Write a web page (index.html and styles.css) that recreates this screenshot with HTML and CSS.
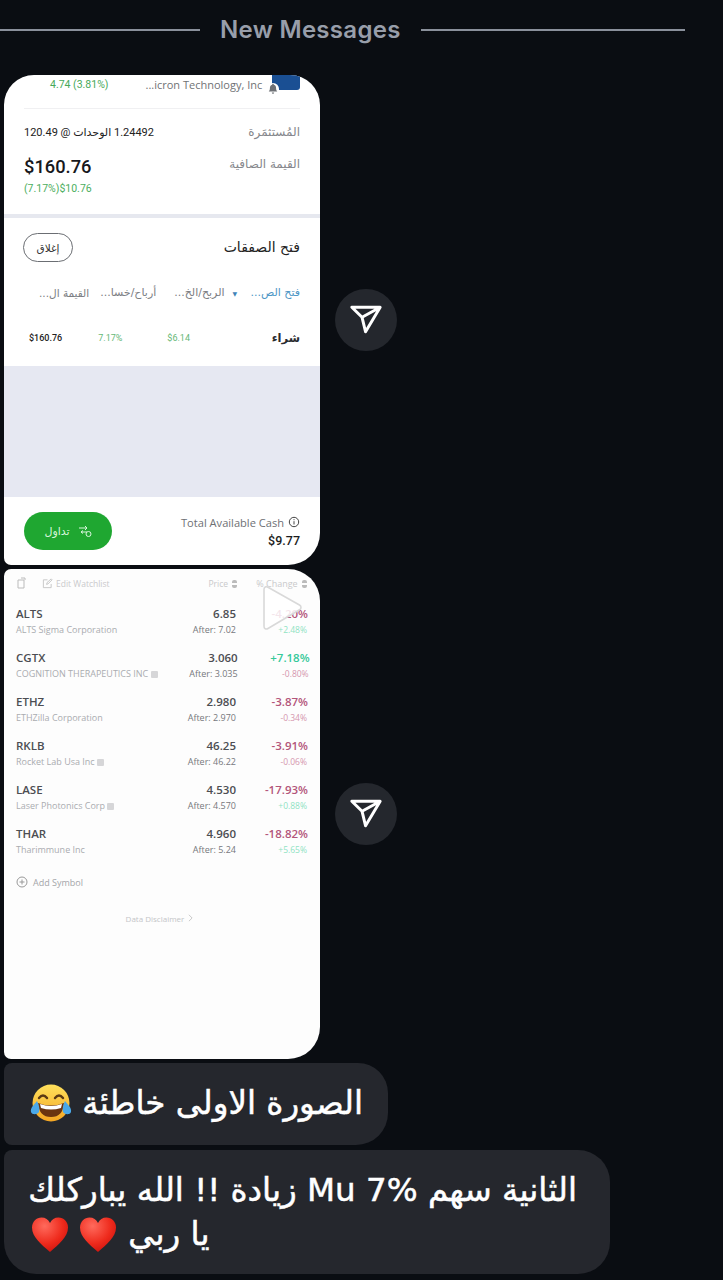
FILE: index.html
```html
<!DOCTYPE html>
<html lang="en">
<head>
<meta charset="utf-8">
<title>New Messages</title>
<link rel="stylesheet" href="styles.css">
</head>
<body>
<main class="chat">
  <header class="divider"><span class="divider-line divider-left"></span><span class="divider-text">New Messages</span><span class="divider-line divider-right"></span></header>

  <section class="media-row row-one">
    <article class="shot shot-one">
      <div class="top-strip">
        <span class="gain-top">4.74 (3.81%)</span>
        <span class="company">...icron Technology, Inc</span>
        <span class="logo-box">
          <svg class="bell" viewBox="0 0 12 14"><path d="M6 1a1 1 0 0 1 1 1c2 .5 2.6 2.2 2.6 4 0 2 .7 3 1.4 4H1c.7-1 1.4-2 1.4-4 0-1.800.6-3.500 2.600-4a1 1 0 0 1 1-1zM4.600 11h2.800a1.400 1.400 0 0 1-2.800 0z" fill="#6d7075"/></svg>
        </span>
      </div>
      <div class="summary">
        <div class="line-invested">
          <span class="units" dir="rtl">1.24492 الوحدات @ 120.49</span>
          <span class="label" dir="rtl">المُستثمَرة</span>
        </div>
        <div class="line-value">
          <div><div class="amount">$160.76</div><div class="amount-gain">(7.17%)$10.76</div></div>
          <span class="label label-net" dir="rtl">القيمة الصافية</span>
        </div>
      </div>
      <div class="trades-head">
        <button class="close-btn" dir="rtl">إغلاق</button>
        <span class="trades-title" dir="rtl">فتح الصفقات</span>
      </div>
      <div class="tabs">
        <span class="tab tab-small" dir="rtl">القيمة ال...</span>
        <span class="tab tab-pl" dir="rtl">أرباح/خسا...</span>
        <span class="tab tab-pnl" dir="rtl">الربح/الخ...</span>
        <span class="caret">▼</span>
        <span class="tab tab-active" dir="rtl">فتح الص...</span>
      </div>
      <div class="trade-row">
        <span class="cell-value">$160.76</span>
        <span class="cell-pct">7.17%</span>
        <span class="cell-gain">$6.14</span>
        <span class="cell-type" dir="rtl">شراء</span>
      </div>
      <div class="empty-block"></div>
      <div class="shot-foot">
        <button class="trade-btn" dir="rtl">
          <svg class="trade-icon" viewBox="0 0 14 14"><path d="M1 4h8M7 2l2 2-2 2M9 8H3M5 6.500 3 8l2 1.500" fill="none" stroke="#d8f5dc" stroke-width="1"/><circle cx="10.500" cy="10" r="2.500" fill="none" stroke="#d8f5dc" stroke-width="1"/></svg>
          <span>تداول</span>
        </button>
        <div class="cash">
          <div class="cash-label">Total Available Cash
            <svg class="info" viewBox="0 0 12 12"><circle cx="6" cy="6" r="4.700" fill="none" stroke="#444" stroke-width="1"/><path d="M6 5.200v3.300M6 3.200v1" stroke="#444" stroke-width="1"/></svg>
          </div>
          <div class="cash-value">$9.77</div>
        </div>
      </div>
    </article>
    <button class="send-btn" aria-label="Share">
      <svg class="send-icon" viewBox="0 0 24 24"><path d="M22 3 9.218 10.083M11.698 20.334 22 3H2l7.218 7.083z" fill="none" stroke="#fff" stroke-width="2.100" stroke-linejoin="round"/></svg>
    </button>
  </section>

  <section class="media-row row-two">
    <article class="shot shot-two">
      <div class="watch-head">
        <svg class="copy-icon" viewBox="0 0 12 12"><path d="M2 3h6v8H2zM5 1h4v2" fill="none" stroke="#bbb" stroke-width="1"/></svg>
        <svg class="edit-icon" viewBox="0 0 12 12"><path d="M10 6.500V10.500H1.500V2H6M5 7l.5-2L10 1l1 1-4.500 4.500z" fill="none" stroke="#c4c4c4" stroke-width="1"/></svg>
        <span class="edit-text">Edit Watchlist</span>
        <span class="head-price">Price <i class="sort"></i></span>
        <span class="head-change">% Change <i class="sort"></i></span>
      </div>
      <div class="stock"><div class="stock-id"><b>ALTS</b><small>ALTS Sigma Corporation</small></div><div class="stock-price"><b>6.85</b><small>After: 7.02</small></div><div class="stock-change"><b class="down">-4.20%</b><small class="up-light">+2.48%</small></div></div>
      <div class="stock"><div class="stock-id"><b>CGTX</b><small>COGNITION THERAPEUTICS INC <i class="chip"></i></small></div><div class="stock-price"><b>3.060</b><small>After: 3.035</small></div><div class="stock-change"><b class="up">+7.18%</b><small class="down-light">-0.80%</small></div></div>
      <div class="stock"><div class="stock-id"><b>ETHZ</b><small>ETHZilla Corporation</small></div><div class="stock-price"><b>2.980</b><small>After: 2.970</small></div><div class="stock-change"><b class="down">-3.87%</b><small class="down-light">-0.34%</small></div></div>
      <div class="stock"><div class="stock-id"><b>RKLB</b><small>Rocket Lab Usa Inc <i class="chip"></i></small></div><div class="stock-price"><b>46.25</b><small>After: 46.22</small></div><div class="stock-change"><b class="down">-3.91%</b><small class="down-light">-0.06%</small></div></div>
      <div class="stock"><div class="stock-id"><b>LASE</b><small>Laser Photonics Corp <i class="chip"></i></small></div><div class="stock-price"><b>4.530</b><small>After: 4.570</small></div><div class="stock-change"><b class="down">-17.93%</b><small class="up-light">+0.88%</small></div></div>
      <div class="stock"><div class="stock-id"><b>THAR</b><small>Tharimmune Inc</small></div><div class="stock-price"><b>4.960</b><small>After: 5.24</small></div><div class="stock-change"><b class="down">-18.82%</b><small class="up-light">+5.65%</small></div></div>
      <div class="add-symbol">
        <svg class="add-icon" viewBox="0 0 12 12"><circle cx="6" cy="6" r="5" fill="none" stroke="#999" stroke-width="1"/><path d="M6 3.500v5M3.500 6h5" stroke="#999" stroke-width="1"/></svg>
        <span>Add Symbol</span>
      </div>
      <div class="disclaimer">Data Disclaimer <svg class="chev" viewBox="0 0 6 10"><path d="m1 1 4 4-4 4" fill="none" stroke="#bbb" stroke-width="1"/></svg></div>
      <svg class="play" viewBox="0 0 42 46"><path d="M3 4.500c0-2.500 2-3.500 4-2.300L38.500 20c2 1.200 2 3.600 0 4.800L7 43.500c-2 1.200-4 .2-4-2.300z" fill="rgba(255,255,255,.85)" stroke="#d9d9d9" stroke-width="1.600"/></svg>
    </article>
    <button class="send-btn" aria-label="Share">
      <svg class="send-icon" viewBox="0 0 24 24"><path d="M22 3 9.218 10.083M11.698 20.334 22 3H2l7.218 7.083z" fill="none" stroke="#fff" stroke-width="2.100" stroke-linejoin="round"/></svg>
    </button>
  </section>

  <div class="bubble bubble-one" dir="rtl">الصورة الاولى خاطئة
    <svg class="emoji-joy" viewBox="0 0 42 38"><defs><linearGradient id="joyFace" x1="0" y1="0" x2="0" y2="1"><stop offset="0" stop-color="#ffe15c"/><stop offset="1" stop-color="#f5a623"/></linearGradient></defs><circle cx="21" cy="19" r="18.500" fill="url(#joyFace)"/><path d="M9 14q4-5 8 0M25 14q4-5 8 0" fill="none" stroke="#5b3a14" stroke-width="2.400" stroke-linecap="round"/><path d="M8 19q13 5 26 0q-1 14-13 14T8 19z" fill="#6b3410"/><path d="M10 20q11 4 22 0l-1 4q-10 3-20 0z" fill="#fff"/><path d="M7 17c-3 4-7 7-6 11 1 3 6 3 8 0 1-3 0-7-2-11zM35 17c3 4 7 7 6 11-1 3-6 3-8 0-1-3 0-7 2-11z" fill="#4aa8e8"/></svg>
  </div>
  <div class="bubble bubble-two" dir="rtl">الثانية سهم <span dir="ltr">7%</span> Mu زيادة !! الله يباركلك<br>يا ربي
    <svg class="emoji-heart" viewBox="0 0 38 38"><defs><radialGradient id="heartFill" cx=".35" cy=".25" r=".85"><stop offset="0" stop-color="#ff6a5c"/><stop offset=".6" stop-color="#ee2a1c"/><stop offset="1" stop-color="#c8100c"/></radialGradient><path id="heartShape" d="M19 36C10 28 1 21 1 11.500 1 5.500 5.500 1.500 10.500 1.500c3.800 0 7 2 8.500 5.500 1.500-3.500 4.700-5.500 8.500-5.500C32.500 1.500 37 5.500 37 11.500 37 21 28 28 19 36z" fill="url(#heartFill)"/></defs><use href="#heartShape"/></svg><svg class="emoji-heart" viewBox="0 0 38 38"><use href="#heartShape"/></svg>
  </div>
</main>
</body>
</html>
```
FILE: styles.css
```css
* { box-sizing: border-box; }
html, body { margin: 0; padding: 0; }
body { background: #0a0d12; width: 723px; height: 1280px; overflow: hidden; font-family: "Open Sans", "DejaVu Sans", sans-serif; }
button { font: inherit; padding: 0; margin: 0; }
.chat { display: flex; flex-direction: column; padding-left: 4px; }

.divider { display: flex; align-items: center; height: 60px; margin: 0 38px 15px -4px; gap: 20px; }
.divider-line { height: 2px; background: #8a909b; }
.divider-left { width: 200px; }
.divider-right { flex: 1; }
.divider-text { font-family: Inter, sans-serif; font-weight: 600; font-size: 24px; letter-spacing: .3px; color: #989eaa; line-height: 30px; white-space: nowrap; }

.media-row { display: flex; align-items: center; gap: 15px; }
.row-one { margin-bottom: 4px; }
.row-two { margin-bottom: 4px; }
.shot { position: relative; width: 316px; height: 490px; background: #fff; overflow: hidden; }
.shot-one { border-radius: 30px 30px 32px 7px; display: flex; flex-direction: column; }
.shot-two { border-radius: 7px 32px 32px 7px; background: #fdfdfd; }
.send-btn { width: 62px; height: 62px; border-radius: 50%; border: 0; background: #24272d; display: flex; align-items: center; justify-content: center; }
.send-icon { width: 34px; height: 34px; }

.top-strip { display: flex; align-items: center; height: 34px; margin: 0 20px; border-bottom: 1px solid #f0f0f2; position: relative; padding-bottom: 16px; padding-top: 2px; }
.gain-top { margin-left: 26px; font-family: Roboto, sans-serif; font-size: 10.500px; color: #47a95a; line-height: 14px; }
.company { margin-left: 37px; font-size: 11px; color: #707275; line-height: 16px; white-space: nowrap; }
.logo-box { position: absolute; top: 0; right: 0; width: 28px; height: 15px; background: #1a4f93; border-radius: 0 0 3px 3px; }
.bell { position: absolute; left: -5px; top: 8px; width: 12px; height: 12px; background: #fff; border-radius: 50% 50% 0 0; }

.summary { padding: 0 20px; height: 109px; border-bottom: 4px solid #e6e8ef; }
.line-invested { display: flex; justify-content: space-between; align-items: center; padding-top: 12px; height: 34px; }
.units { font-family: Roboto, "DejaVu Sans", sans-serif; font-size: 11px; color: #222; }
.label { font-family: "DejaVu Sans", sans-serif; font-size: 12px; color: #85878c; }
.label-net { margin-top: 3px; }
.line-value { display: flex; justify-content: space-between; align-items: flex-start; padding-top: 11px; }
.amount { font-family: Roboto, sans-serif; font-weight: 500; font-size: 18.300px; line-height: 24px; color: #17181c; margin-top: 1px; }
.amount-gain { font-family: Roboto, sans-serif; font-size: 10.500px; color: #4cae60; line-height: 14px; margin-top: 3px; }

.trades-head { display: flex; justify-content: space-between; align-items: center; padding: 15px 20px 0 19px; }
.close-btn { width: 50px; height: 29px; border: 1px solid #6b6e73; border-radius: 15px; background: #fff; font-family: "DejaVu Sans", sans-serif; font-size: 10.500px; color: #333; }
.trades-title { font-family: "DejaVu Sans", sans-serif; font-size: 14px; color: #222; line-height: 20px; margin-top: -2px; }

.tabs { display: flex; align-items: center; height: 20px; margin-top: 21px; padding: 0 20px 0 35px; }
.tab { font-family: "DejaVu Sans", sans-serif; font-size: 11px; color: #7c7e83; white-space: nowrap; line-height: 20px; }
.tab-small { font-size: 10.500px; }
.tab-pl { margin-left: 11px; }
.tab-pnl { margin-left: 18px; }
.caret { margin-left: 8px; font-size: 6px; color: #3f83b8; font-family: "DejaVu Sans", sans-serif; }
.tab-active { margin-left: auto; color: #4f97c6; }

.trade-row { display: flex; align-items: center; height: 20px; margin-top: 25px; padding: 0 20px 0 25px; font-family: Roboto, sans-serif; font-size: 9px; position: relative; }
.cell-value { color: #222; font-weight: 500; }
.cell-pct { margin-left: 36px; color: #66b877; }
.cell-gain { margin-left: 45px; color: #66b877; }
.cell-type { margin-left: auto; font-family: "DejaVu Sans", sans-serif; font-weight: 700; font-size: 11.500px; color: #2a2b2f; }

.empty-block { height: 131px; margin-top: 18px; background: #e6e8f2; }
.shot-foot { flex: 1; display: flex; justify-content: space-between; align-items: flex-start; padding: 15px 20px 0 20px; }
.trade-btn { width: 88px; height: 38px; border: 0; border-radius: 19px; background: #1fa731; color: #d8f5dc; display: flex; align-items: center; justify-content: center; gap: 8px; font-family: "DejaVu Sans", sans-serif; font-size: 11px; }
.trade-icon { width: 14px; height: 14px; }
.cash { text-align: right; }
.cash-label { font-size: 11.100px; line-height: 20px; color: #6e7074; display: flex; align-items: center; gap: 4px; padding-top: 1px; }
.info { width: 12px; height: 12px; margin-top: -3px; }
.cash-value { font-family: Roboto, sans-serif; font-weight: 500; font-size: 12.500px; line-height: 18px; color: #1b1c20; margin-top: -1px; }

.watch-head { display: flex; align-items: center; height: 14px; margin-top: 7px; padding: 0 13px 0 12px; font-size: 8.500px; color: #c9c9cb; white-space: nowrap; }
.copy-icon { width: 12px; height: 12px; }
.edit-icon { width: 11px; height: 11px; margin-left: 14px; }
.edit-text { margin-left: 3px; }
.head-price { margin-left: auto; }
.head-change { margin-left: 19px; font-size: 9px; }
.sort { display: inline-block; width: 5px; height: 8px; margin-left: 2px; background: linear-gradient(#bbb 0 40%, transparent 40% 60%, #bbb 60%); border-radius: 2px; vertical-align: -1px; }

.stock { display: grid; grid-template-columns: 1fr 80px 72px; align-items: start; height: 44px; padding: 0 12px; }
.watch-head + .stock { margin-top: 16px; }
.stock b { display: block; font-weight: 600; font-size: 11.500px; line-height: 16px; color: #4c4d52; }
.stock small { display: block; font-size: 9px; line-height: 15px; color: #aaacb0; white-space: nowrap; }
.stock-price { text-align: right; }
.stock-price small { color: #76787c; }
.stock-change { text-align: right; }
.stock-change small { font-size: 8.500px; padding-right: 1px; }
.stock .down { color: #b3557a; }
.stock .up { color: #35c99a; }
.stock .up-light { color: #8fe3c3; }
.stock .down-light { color: #d596ae; }
.chip { display: inline-block; width: 7px; height: 7px; background: #d6d6d8; border-radius: 1px; vertical-align: -1px; }

.add-symbol { display: flex; align-items: center; gap: 5px; height: 16px; margin: 4px 0 0 12px; font-size: 9px; color: #a4a5a9; }
.add-icon { width: 12px; height: 12px; }
.disclaimer { margin-top: 22px; padding-right: 5px; text-align: center; font-size: 8px; line-height: 14px; color: #c4c5c8; }
.chev { width: 5px; height: 8px; margin-left: 2px; }
.play { position: absolute; left: 257px; top: 16px; width: 42px; height: 46px; }

.bubble { background: #25272d; color: #fff; font-family: "DejaVu Sans", sans-serif; font-size: 32.500px; -webkit-text-stroke: .5px #fff; }
.bubble-one { width: 384px; height: 82px; margin-bottom: 5px; border-radius: 8px 30px 32px 8px; padding: 18px 25px 0 0; line-height: 44px; white-space: nowrap; }
.bubble-two { width: 606px; height: 124px; border-radius: 8px 32px 32px 32px; padding: 18px 33px 0 26px; line-height: 44px; white-space: nowrap; text-align: left; }
.emoji-joy { width: 42px; height: 38px; vertical-align: -8px; }
.emoji-heart { width: 40px; height: 38px; vertical-align: -9px; }
.emoji-heart:first-of-type { margin-left: 8px; }
```
